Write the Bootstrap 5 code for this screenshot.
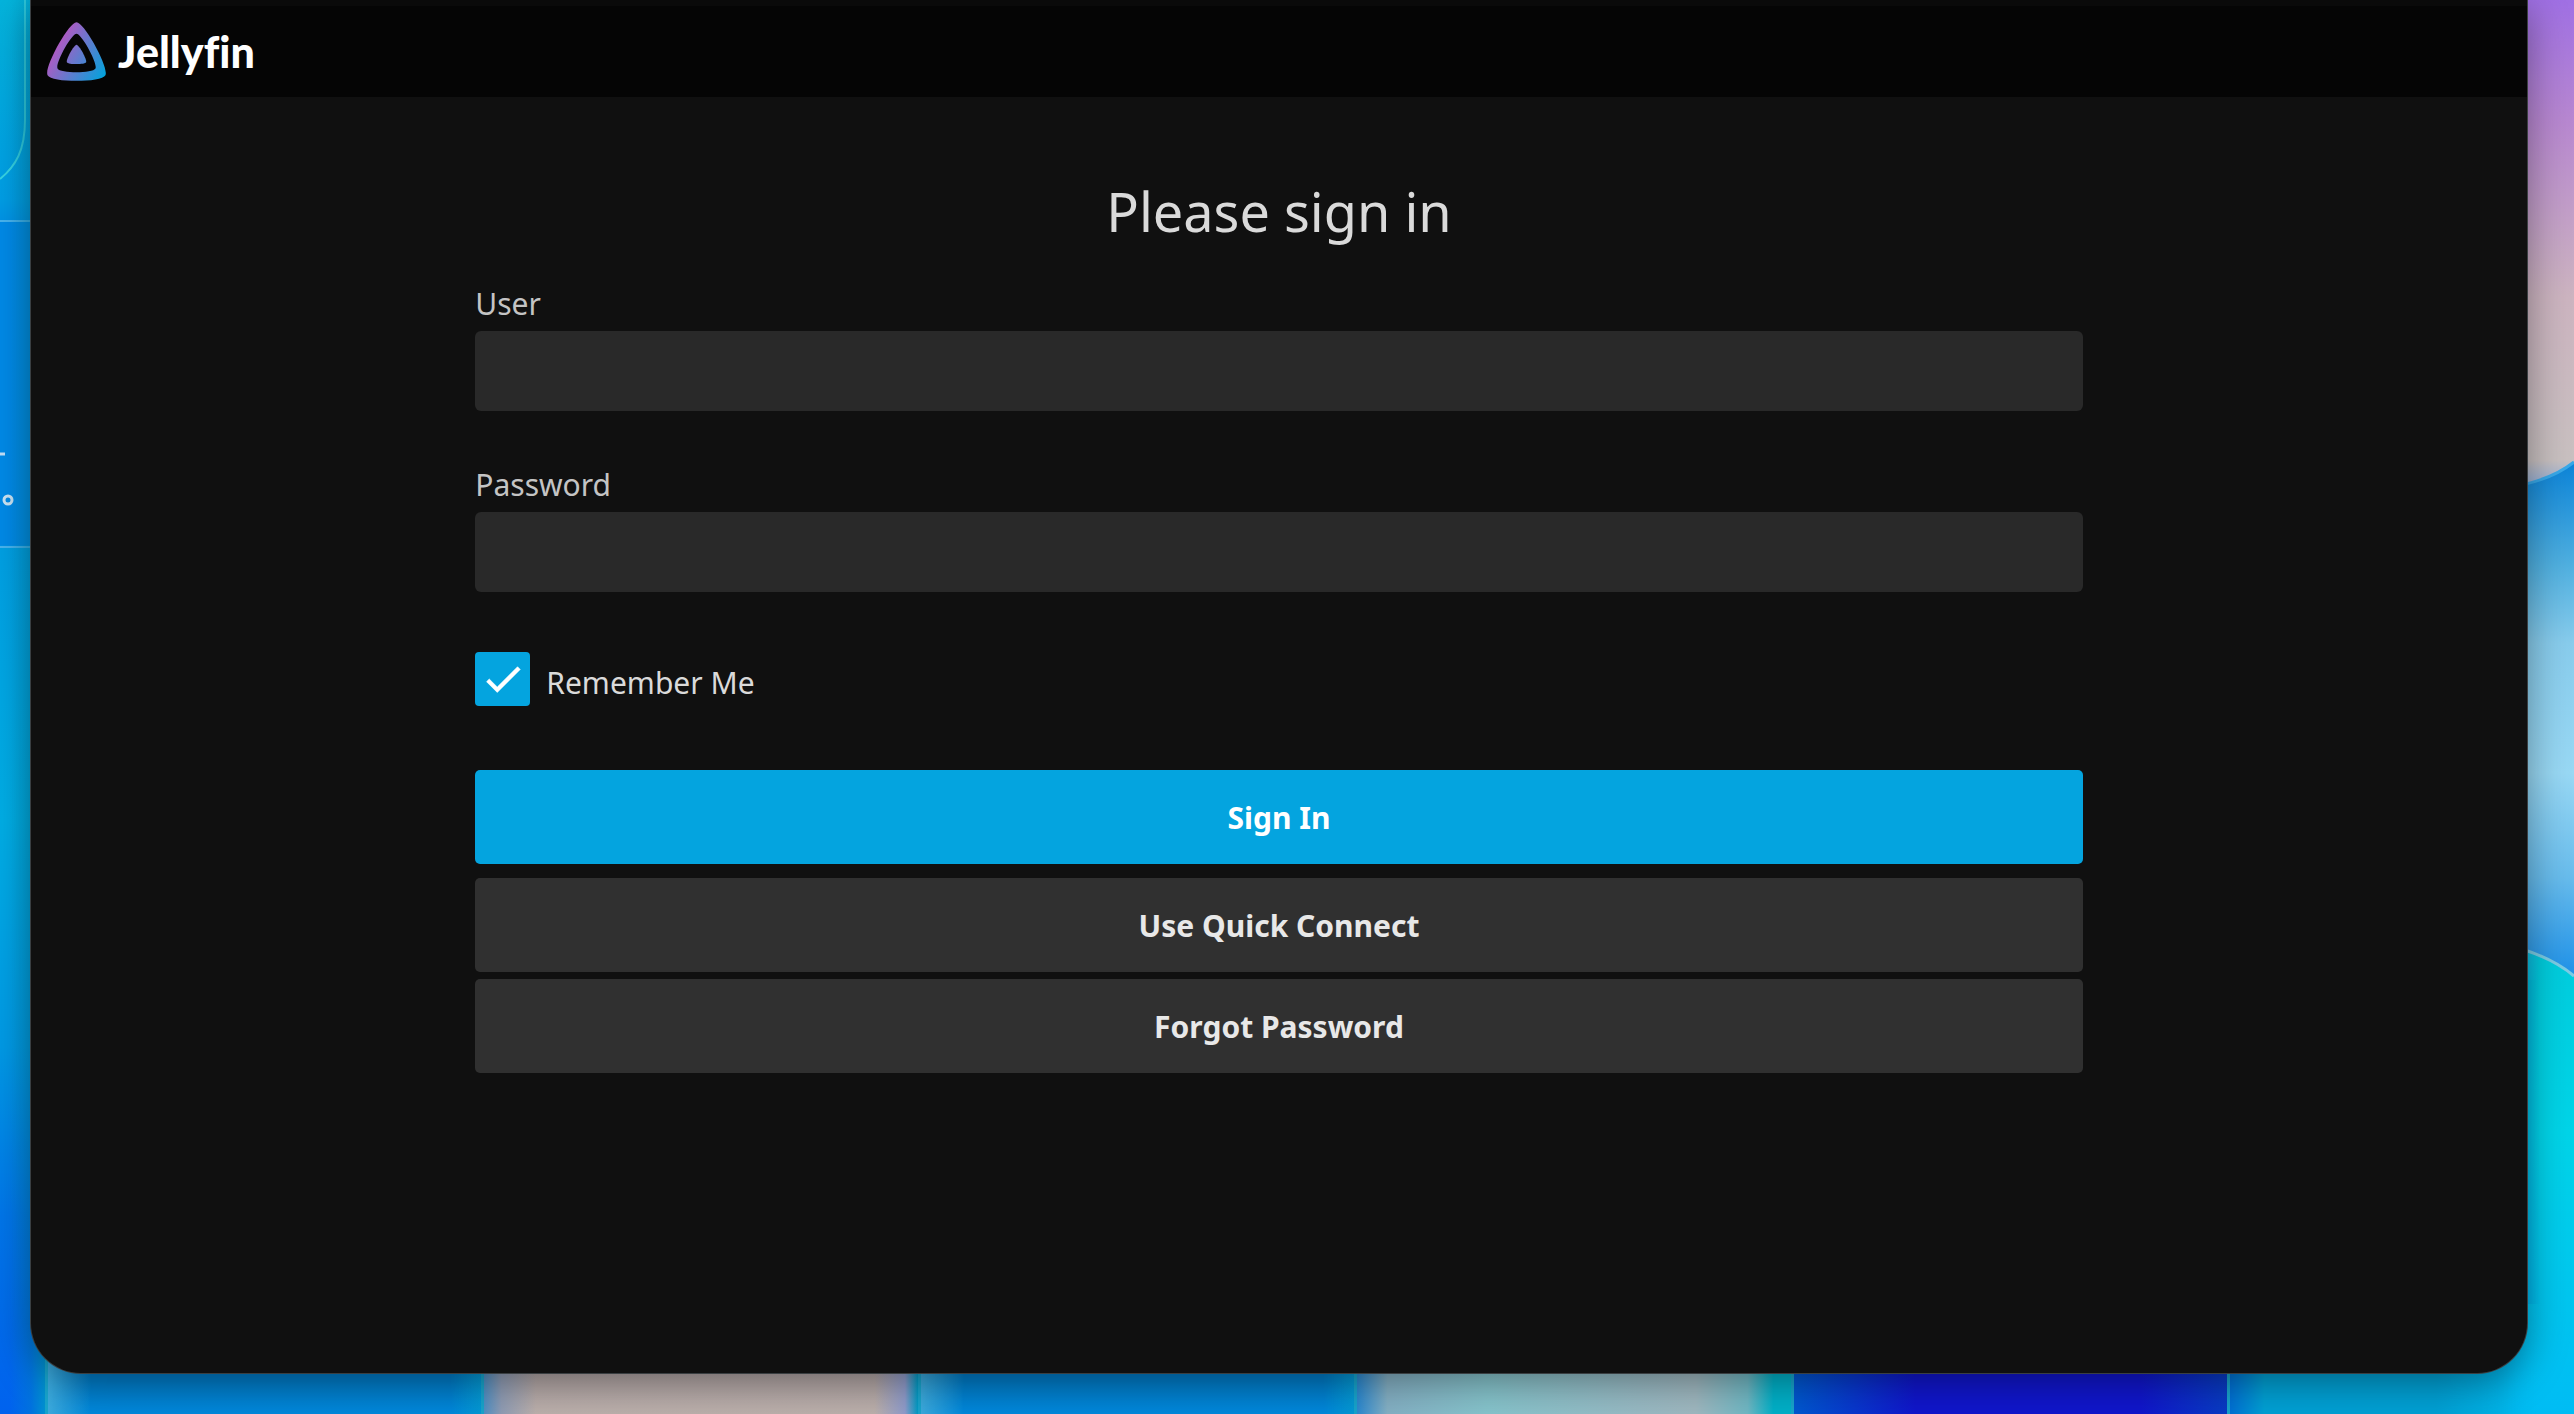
<!DOCTYPE html>
<html lang="en" data-bs-theme="dark">
<head>
<meta charset="utf-8">
<meta name="viewport" content="width=device-width, initial-scale=1">
<title>Jellyfin</title>
<link href="https://cdn.jsdelivr.net/npm/bootstrap@5.3.0/dist/css/bootstrap.min.css" rel="stylesheet">
<style>
  body { font-family: "Noto Sans", sans-serif; font-size: 30px; background: #0088d8; }
  .desktop { min-height: 100vh; padding: 0 47px 41px 31px; }

  /* wallpaper behind the window */
  .wall-left { width: 45px; background: linear-gradient(#04b4dc 0, #009ee6 200px, #0094e6 220px, #008ae8 221px, #008ae8 545px, #00a0e4 547px, #00aee6 58%, #009ae6 74%, #0076ea 86%, #0062ee 100%); }
  .wall-left::after { content: ""; position: absolute; inset: 0; background: linear-gradient(90deg, transparent 10px, rgba(0, 150, 190, .3) 31px, rgba(0, 160, 200, .75)); }
  .wall-right { width: 110px; }
  .wall-bottom { height: 110px; padding-left: 45px; }
  .tile { border-left: 3px solid #18a4cc; }
  .tile-sea { background: linear-gradient(90deg, #3ba9dc, transparent 10% 93%, #0498d4), linear-gradient(#007cc8 70%, #0088dc); }
  .tile-sand { background: linear-gradient(90deg, #4f8fc4, #8f9cb4 4%, transparent 12% 90%, #8f9bca 97%, #009ac4), linear-gradient(#b0a4a4 60%, #bcb0ac); }
  .tile-mist { background: linear-gradient(90deg, #2a88d0, #84b0c4 7%, #86c4cc 30%, #98bac4 65%, #9fb8c0 78%, #70b8c4 90%, #00b0c8 96%); }
  .tile-ink { background: linear-gradient(90deg, #0058d0, #1016cc 28% 80%, #083cc4); }
  .tile-cyan { width: 347px; background: linear-gradient(90deg, #0070d4, #00a0d4 10% 60%, #00c0f4 95%); }

  .app-window { background: #101010; border-radius: 0 0 50px 50px; box-shadow: 0 0 0 1px #3a3f42, 0 8px 40px rgba(0, 0, 0, .4); }
  .titlebar { background: #050505; border-top: 6px solid #0a0a0a; height: 97px; padding: 0 16px; gap: 12px; }
  .titlebar svg { width: 59px; height: 59px; }
  .wordmark { font: 900 43px/59px Lato, sans-serif; font-variant-ligatures: none; color: #fff; }

  .signin { width: 64.4%; padding-top: 78px; color: #dadada; }
  .signin h1 { font-size: 54px; line-height: 72px; font-weight: 400; color: #dadada; margin-bottom: 36px; }
  .signin .form-label { font-size: 30px; color: #c4c4c4; line-height: 42px; margin-bottom: 6px; }
  .signin .form-control { height: 80px; background: #292929; border: 0; border-radius: 6px; font-size: 30px; color: #fff; margin-bottom: 53px; }
  .signin .form-control:focus { box-shadow: 0 0 0 3px #04a4df; }
  .remember { gap: 16px; margin: 60px 0; line-height: 54px; }
  .remember label { padding-top: 4px; }
  .remember .form-check-input { width: 55px; height: 54px; margin: 0; border: 0; border-radius: 4px; background-color: #292929; background-size: 46px; }
  .remember .form-check-input:checked { background-color: #04a4df; background-image: url("data:image/svg+xml,%3Csvg xmlns='http://www.w3.org/2000/svg' viewBox='0 0 24 24'%3E%3Cpath fill='%23fff' stroke='%23fff' stroke-width='.3' d='M9 16.17 4.83 12l-1.42 1.41L9 19 21 7l-1.41-1.41z'/%3E%3C/svg%3E"); }
  .signin .btn { height: 94px; border: 0; border-radius: 5px; font-size: 30px; font-weight: 700; background: #303030; color: #e8e8e8; }
  .signin .btn.btn-primary { background: #04a4df; color: #fff; margin-bottom: 14px; }
  .signin .btn.btn-secondary { margin-bottom: 7px; }
</style>
</head>
<body>
<div class="desktop position-relative d-flex overflow-hidden">
  <div class="wall-bottom position-absolute bottom-0 start-0 end-0 d-flex" aria-hidden="true">
    <div class="tile tile-sea col"></div>
    <div class="tile tile-sand col"></div>
    <div class="tile tile-sea col"></div>
    <div class="tile tile-mist col"></div>
    <div class="tile tile-ink col"></div>
    <div class="tile tile-cyan"></div>
  </div>
  <div class="wall-left position-absolute top-0 bottom-0 start-0" aria-hidden="true">
    <svg width="45" height="560" fill="none" class="d-block">
      <path d="M25 0V120C25 150 16 166 0 179" stroke="#38d4e4" stroke-width="2"/>
      <path d="M0 221H45M0 547H45" stroke="#48b4f0" stroke-width="2"/>
      <path d="M0 454H5" stroke="#c4e0f8" stroke-width="3"/>
      <circle cx="8" cy="500" r="4" stroke="#cce4f4" stroke-width="3"/>
    </svg>
  </div>
  <svg class="wall-right position-absolute top-0 end-0 h-100" viewBox="0 0 110 1414" preserveAspectRatio="none" aria-hidden="true">
    <defs>
      <linearGradient id="dusk" x2="0" y2="1"><stop stop-color="#a070e4"/><stop offset=".25" stop-color="#b888d0"/><stop offset=".6" stop-color="#ccb4c0"/><stop offset=".93" stop-color="#c8c0c0"/><stop offset="1" stop-color="#80a8e0"/></linearGradient>
      <linearGradient id="sky" x2="0" y2="1"><stop stop-color="#0c84d8"/><stop offset=".2" stop-color="#50b0e0"/><stop offset=".35" stop-color="#88ccec"/><stop offset=".6" stop-color="#98d8f4"/><stop offset=".8" stop-color="#68bcec"/><stop offset="1" stop-color="#1c90e8"/></linearGradient>
      <linearGradient id="lagoon" x2="0" y2="1"><stop stop-color="#00ccdc"/><stop offset=".4" stop-color="#00d4e8"/><stop offset=".8" stop-color="#00c4f0"/><stop offset="1" stop-color="#00bcf4"/></linearGradient>
      <linearGradient id="fade"><stop offset=".3" stop-color="#fff" stop-opacity="0"/><stop offset=".7" stop-color="#fff"/></linearGradient>
      <mask id="soft"><path fill="url(#fade)" d="M0 900H110V1414H0z"/></mask>
    </defs>
    <path fill="url(#dusk)" d="M40 0H110V495H40z"/>
    <path fill="url(#sky)" d="M40 488Q85 482 110 462V980H40z"/>
    <path fill="none" stroke="#38a8e8" stroke-width="3" d="M40 488Q85 482 110 462"/>
    <path fill="url(#lagoon)" mask="url(#soft)" d="M0 945H40Q85 955 110 976V1414H0z"/>
    <path fill="none" stroke="#7ccce4" stroke-width="3" d="M40 944Q85 955 110 976"/>
  </svg>

  <div class="app-window position-relative flex-grow-1 overflow-hidden">
    <header class="titlebar d-flex align-items-center">
      <svg viewBox="22 22 468 468" aria-hidden="true">
        <defs><linearGradient id="brand" gradientUnits="userSpaceOnUse" x1="110" y1="213" x2="496" y2="436"><stop stop-color="#aa5cc3"/><stop offset="1" stop-color="#00a4dc"/></linearGradient></defs>
        <path fill="url(#brand)" d="M256 201.600c-20.400 0-86.200 119.300-76.200 139.400s142.500 19.900 152.400 0S276.500 201.600 256 201.600z"/>
        <path fill="url(#brand)" fill-rule="evenodd" d="M256 23.300c-61.600 0-259.800 359.400-229.600 420.100s429.300 60 459.200 0S317.600 23.300 256 23.300zM406.500 390.800c-19.600 39.300-281.100 39.800-300.900 0s110.100-275.300 150.400-275.300S426.100 351.400 406.500 390.800z"/>
      </svg>
      <span class="wordmark">Jellyfin</span>
    </header>
    <main>
      <form class="signin mx-auto">
        <h1 class="text-center">Please sign in</h1>
        <label class="form-label d-block" for="user">User</label>
        <input class="form-control" type="text" id="user" autocomplete="username">
        <label class="form-label d-block" for="password">Password</label>
        <input class="form-control" type="password" id="password" autocomplete="current-password">
        <div class="remember d-flex align-items-start">
          <input class="form-check-input" type="checkbox" id="remember" checked>
          <label for="remember">Remember Me</label>
        </div>
        <button class="btn btn-primary w-100 d-block" type="submit">Sign In</button>
        <button class="btn btn-secondary w-100 d-block" type="button">Use Quick Connect</button>
        <button class="btn btn-secondary w-100 d-block" type="button">Forgot Password</button>
      </form>
    </main>
  </div>
</div>
<script src="https://cdn.jsdelivr.net/npm/bootstrap@5.3.0/dist/js/bootstrap.bundle.min.js"></script>
</body>
</html>
